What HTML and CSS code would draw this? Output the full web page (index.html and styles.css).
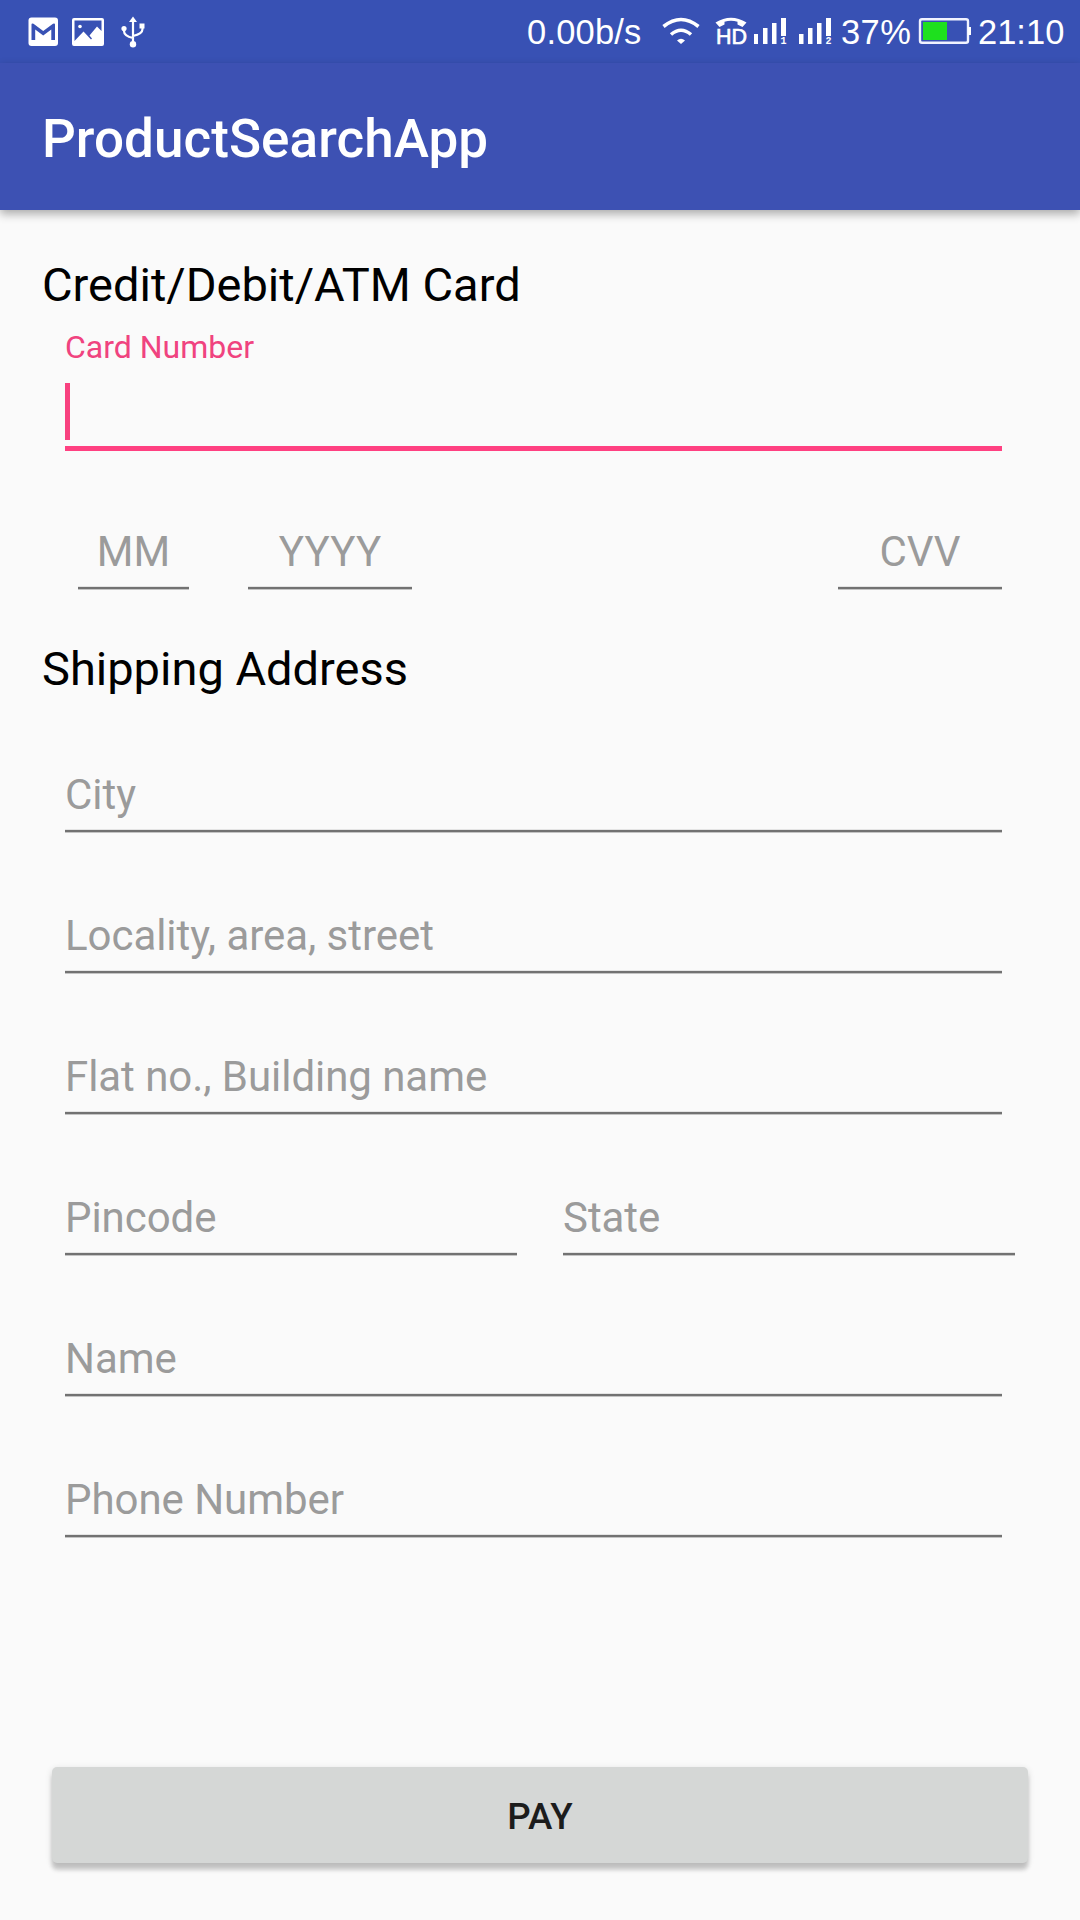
FILE: index.html
```html
<!DOCTYPE html>
<html lang="en">
<head>
<meta charset="utf-8">
<title>ProductSearchApp</title>
<link rel="stylesheet" href="styles.css">
</head>
<body>
<div class="status">
  <svg class="status-left" width="150" height="63" viewBox="0 0 150 63" fill="#fff">
    <rect x="28.500" y="17.500" width="29.500" height="28.500" rx="3"/>
    <path d="M31.500 40V24.500Q31.500 23 33.500 23.700L43.200 31L53 23.700Q55 23 55 24.500V40H51.300V29.500L43.200 35.500L35.200 29.500V40Z" fill="#3851b4"/>
    <path fill-rule="evenodd" d="M74 18h28a2 2 0 0 1 2 2v24a2 2 0 0 1-2 2H74a2 2 0 0 1-2-2V20a2 2 0 0 1 2-2zM74.500 20.500V41L83.500 31.500L91 39.500L92 38.500L89.500 35.500L97 26.500L101.500 31V20.500z"/>
    <circle cx="80" cy="26.500" r="1.800"/>
    <g fill="none" stroke="#fff" stroke-width="2.200">
      <path d="M133 20v24M124 29v2q0 5 9 7M142.500 26v3q0 5-9.500 7"/>
    </g>
    <path d="M133 16.500l4 5.500h-8z"/>
    <circle cx="133" cy="44.200" r="3.200"/>
    <circle cx="124" cy="28.500" r="2.600"/>
    <path d="M139.500 23.500h5v5h-5z"/>
  </svg>
  <span class="speed">0.00b/s</span>
  <svg class="wifi" width="38" height="63" viewBox="662 0 38 63">
    <path d="M663.500 26.500Q681 12.500 698.500 26.500M671 34.500Q681 26 691 34.500" fill="none" stroke="#fff" stroke-width="3.600"/>
    <path d="M677 40.500q4-3.500 8 0l-4 3.500z" fill="#fff"/>
  </svg>
  <svg class="signal" width="118" height="63" viewBox="714 0 118 63" fill="#fff">
    <path d="M715.500 22.500Q731 13 746.500 22.500L742.500 27L737.500 24.500V21.700Q731 20 724.500 21.700V24.500L719.500 27Z"/>
    <text class="hd" x="716" y="44.300" textLength="31" lengthAdjust="spacingAndGlyphs">HD</text>
    <path d="M754 34h4v10h-4zM763 28h4.500v16h-4.500zM772 23h4.500v21h-4.500zM781 18h5v18h-5z"/>
    <text class="sim" x="780.500" y="44">1</text>
    <path d="M799 34h4.500v10h-4.500zM808 28h4.500v16h-4.500zM817 23h4.500v21h-4.500zM826 18h5v18h-5z"/>
    <text class="sim" x="825.500" y="44">2</text>
  </svg>
  <span class="percent">37%</span>
  <svg class="battery" width="54" height="63" viewBox="918 0 54 63">
    <rect x="920" y="19.300" width="48" height="23.500" rx="2" fill="none" stroke="#f1f3ff" stroke-width="2.400"/>
    <rect x="923" y="22" width="24" height="18" fill="#1ee01e"/>
    <path d="M968 27h3v8h-3z" fill="#fff"/>
  </svg>
  <span class="time">21:10</span>
</div>
<header class="toolbar"><h1>ProductSearchApp</h1></header>
<form class="form">
  <h2>Credit/Debit/ATM Card</h2>
  <label class="float-label">Card Number</label>
  <div class="field-active"><span class="caret"></span></div>
  <div class="row expiry">
    <input class="field month" placeholder="MM">
    <input class="field year" placeholder="YYYY">
    <input class="field cvv" placeholder="CVV">
  </div>
  <h2 class="shipping">Shipping Address</h2>
  <div class="address">
    <input class="field" placeholder="City">
    <input class="field" placeholder="Locality, area, street">
    <input class="field" placeholder="Flat no., Building name">
    <div class="row halves">
      <input class="field" placeholder="Pincode">
      <input class="field" placeholder="State">
    </div>
    <input class="field" placeholder="Name">
    <input class="field" placeholder="Phone Number">
  </div>
  <button class="pay" type="button">PAY</button>
</form>
</body>
</html>
```

FILE: styles.css
```css
* { box-sizing: border-box; }

body {
  margin: 0;
  width: 1080px;
  height: 1920px;
  overflow: hidden;
  background: #fafafa;
  font-family: Roboto, sans-serif;
}

.status {
  display: flex;
  height: 63px;
  background: #3851b4;
  color: #fff;
  font: 34.5px/54px "Liberation Sans", sans-serif;
  white-space: nowrap;
}
.status svg { flex: none; display: block; }
.speed { width: 135px; margin-left: 377px; padding-top: 5px; letter-spacing: .2px; }
.signal { margin-left: 14px; }
.percent { width: 77px; margin-left: 9px; padding-top: 5px; letter-spacing: .4px; }
.time { margin-left: 6px; padding-top: 5px; }
.hd { font: 22px "Liberation Sans", sans-serif; stroke: #fff; stroke-width: .7px; }
.sim { font: bold 10px "Liberation Mono", monospace; }

.toolbar {
  height: 147px;
  padding-left: 42px;
  background: #3d51b3;
  color: #fff;
  box-shadow: 0 4px 9px rgba(0, 0, 0, .32);
}
.toolbar h1 {
  margin: 0;
  padding-top: 45px;
  font-size: 53px;
  font-weight: 500;
  line-height: 62px;
  letter-spacing: .05px;
}

.form {
  display: flex;
  flex-direction: column;
  padding: 47px 52px 0 65px;
}
h2 {
  margin: 0 0 0 -23px;
  font-size: 47px;
  font-weight: 400;
  line-height: 56px;
  color: #000;
}
.float-label {
  margin-top: 15px;
  font-size: 32px;
  line-height: 38px;
  color: #f0437f;
}
.field-active {
  width: 937px;
  height: 68px;
  margin-top: 17px;
  border-bottom: 5px solid #ff4081;
}
.caret {
  display: block;
  width: 5px;
  height: 57px;
  background: #f8417f;
}

.field {
  display: block;
  width: 937px;
  height: 63px;
  margin: 0;
  padding: 0 0 14px;
  border: 0;
  outline: 0;
  font: 42px/49px Roboto, sans-serif;
  letter-spacing: -.05px;
  background: linear-gradient(#e4e4e4 0 1px, #727272 1px 3px, #c4c4c4 3px 4px) 0 100% / 100% 4px no-repeat;
}
.field::placeholder { color: #9b9b9b; opacity: 1; }

.row { display: flex; }
.expiry { margin: 76px 0 0 13px; width: 924px; }
.expiry .field { text-align: center; letter-spacing: .1px; }
.expiry .month { width: 111px; }
.expiry .year { width: 164px; margin-left: 59px; }
.expiry .cvv { width: 164px; margin-left: auto; }
.shipping { margin-top: 51px; }

.address {
  display: flex;
  flex-direction: column;
  gap: 78px;
  margin-top: 73px;
}
.halves { gap: 46px; }
.halves .field { width: 452px; }

.pay {
  width: 976px;
  height: 96px;
  margin: 229px 0 0 -13px;
  padding: 3px 0 0;
  border: 0;
  border-radius: 5px;
  background: #d5d7d6;
  color: #1c1c1c;
  font: 500 36.75px/93px Roboto, sans-serif;
  box-shadow: 0 7px 4px rgba(0, 0, 0, .18), 0 2px 6px 1px rgba(0, 0, 0, .1);
}
```
